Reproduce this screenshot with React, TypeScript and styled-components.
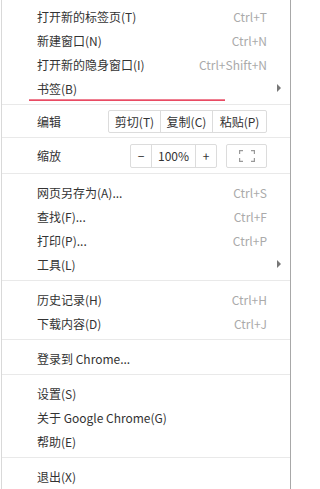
import React from "react";
import styled, { createGlobalStyle } from "styled-components";

const GlobalStyle = createGlobalStyle`
  html, body {
    margin: 0;
    padding: 0;
    background: #fff;
  }
  body {
    font-family: "Noto Sans CJK SC", "Noto Sans", "Liberation Sans", sans-serif;
    font-size: 12px;
    color: #333;
  }
`;

type Entry =
  | { kind: "item"; label: string; shortcut?: string; sub?: boolean; marked?: boolean }
  | { kind: "sep"; after?: number }
  | { kind: "edit" }
  | { kind: "zoom" };

const entries: Entry[] = [
  { kind: "item", label: "打开新的标签页(T)", shortcut: "Ctrl+T" },
  { kind: "item", label: "新建窗口(N)", shortcut: "Ctrl+N" },
  { kind: "item", label: "打开新的隐身窗口(I)", shortcut: "Ctrl+Shift+N" },
  { kind: "item", label: "书签(B)", sub: true, marked: true },
  { kind: "sep", after: 0 },
  { kind: "edit" },
  { kind: "zoom" },
  { kind: "item", label: "网页另存为(A)...", shortcut: "Ctrl+S" },
  { kind: "item", label: "查找(F)...", shortcut: "Ctrl+F" },
  { kind: "item", label: "打印(P)...", shortcut: "Ctrl+P" },
  { kind: "item", label: "工具(L)", sub: true },
  { kind: "sep" },
  { kind: "item", label: "历史记录(H)", shortcut: "Ctrl+H" },
  { kind: "item", label: "下载内容(D)", shortcut: "Ctrl+J" },
  { kind: "sep" },
  { kind: "item", label: "登录到 Chrome..." },
  { kind: "sep" },
  { kind: "item", label: "设置(S)" },
  { kind: "item", label: "关于 Google Chrome(G)" },
  { kind: "item", label: "帮助(E)" },
  { kind: "sep" },
  { kind: "item", label: "退出(X)" },
];

const App = () => {
  return (
    <>
      <GlobalStyle />
      <Menu>
        {entries.map((e, i) => {
          if (e.kind === "sep") return <Separator key={i} $after={e.after} />;
          if (e.kind === "edit")
            return (
              <ControlRow key={i} $height={32}>
                <RowLabel>编辑</RowLabel>
                <ButtonGroup>
                  <GroupButton $width={51}>剪切(T)</GroupButton>
                  <GroupButton $width={51}>复制(C)</GroupButton>
                  <GroupButton $width={53}>粘贴(P)</GroupButton>
                </ButtonGroup>
              </ControlRow>
            );
          if (e.kind === "zoom")
            return (
              <React.Fragment key={i}>
                <Separator $before={0} $after={0} />
                <ControlRow $height={35}>
                  <RowLabel>缩放</RowLabel>
                  <ButtonGroup $tall>
                    <GroupButton $width={20}>−</GroupButton>
                    <GroupButton $width={43}>100%</GroupButton>
                    <GroupButton $width={20}>+</GroupButton>
                  </ButtonGroup>
                  <FullscreenButton>
                    <svg width="16" height="12" viewBox="0 0 16 12" fill="none" stroke="#999" strokeWidth="1.2">
                      <path d="M0.6 4V0.6H4M12 0.6H15.4V4M15.4 8V11.4H12M4 11.4H0.6V8" />
                    </svg>
                  </FullscreenButton>
                </ControlRow>
                <Separator $before={0} $after={6} />
              </React.Fragment>
            );
          return (
            <Item key={i}>
              <ItemLabel>{e.label}</ItemLabel>
              {e.shortcut && <Shortcut>{e.shortcut}</Shortcut>}
              {e.sub && <Arrow />}
              {e.marked && <Underline />}
            </Item>
          );
        })}
      </Menu>
    </>
  );
};

export default App;

const Menu = styled.div`
  width: 290px;
  margin-left: 1px;
  padding-top: 4px;
  height: 489px;
  box-sizing: border-box;
  border-left: 1px solid #d9d9d9;
  border-right: 1px solid #a8a8a8;
  display: flex;
  flex-direction: column;
`;

const Item = styled.div`
  position: relative;
  height: 24px;
  flex: none;
  display: flex;
  align-items: center;
  padding-left: 35px;
  padding-right: 23px;
`;

const ItemLabel = styled.span`
  flex: 1;
  color: #333;
  white-space: nowrap;
`;

const Shortcut = styled.span`
  color: #aaa;
  white-space: nowrap;
`;

const Arrow = styled.span`
  position: absolute;
  right: 9px;
  top: 8px;
  width: 0;
  height: 0;
  border-top: 4px solid transparent;
  border-bottom: 4px solid transparent;
  border-left: 4px solid #777;
`;

const Underline = styled.span`
  position: absolute;
  left: 27px;
  width: 196px;
  bottom: -1px;
  height: 2px;
  background: linear-gradient(#f29aa8, #e5304c);
`;

const Separator = styled.div<{ $before?: number; $after?: number }>`
  flex: none;
  height: 1px;
  background: #e9e9e9;
  margin-top: ${(p) => p.$before ?? 4}px;
  margin-bottom: ${(p) => p.$after ?? 6}px;
`;

const ControlRow = styled.div<{ $height: number }>`
  flex: none;
  height: ${(p) => p.$height}px;
  display: flex;
  align-items: center;
  padding-left: 35px;
  padding-right: 23px;
`;

const RowLabel = styled.span`
  flex: 1;
  color: #333;
`;

const ButtonGroup = styled.div<{ $tall?: boolean }>`
  display: flex;
  height: ${(p) => (p.$tall ? 24 : 23)}px;
  border: 1px solid #dcdcdc;
  border-radius: 2px;
  box-sizing: border-box;
`;

const GroupButton = styled.div<{ $width: number }>`
  width: ${(p) => p.$width}px;
  display: flex;
  align-items: center;
  justify-content: center;
  color: #333;
  white-space: nowrap;
  & + & {
    border-left: 1px solid #dcdcdc;
  }
`;

const FullscreenButton = styled.div`
  margin-left: 9px;
  width: 41px;
  height: 24px;
  box-sizing: border-box;
  border: 1px solid #dcdcdc;
  border-radius: 2px;
  display: flex;
  align-items: center;
  justify-content: center;
`;
